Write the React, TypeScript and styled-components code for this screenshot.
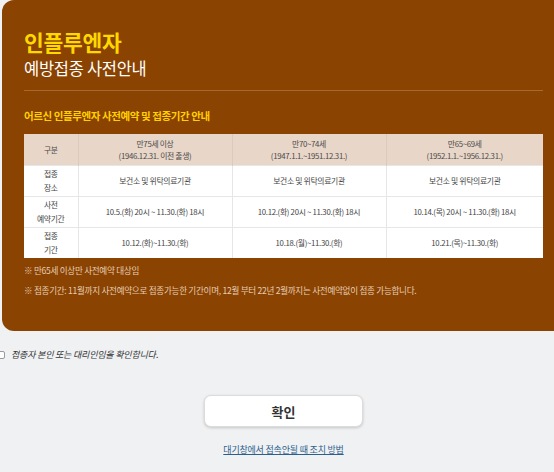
import React from "react";
import styled, { createGlobalStyle } from "styled-components";

const Global = createGlobalStyle`
  html, body { margin: 0; padding: 0; background: #f0f1f3; overflow: hidden; }
  body { font-family: "Noto Sans CJK KR", "Noto Sans", sans-serif; }
`;

const Page = styled.div`
  width: 563px;
  margin-left: 2px;
`;

const Panel = styled.section`
  background: #8a4300;
  border-radius: 12px;
  padding: 27px 22px 30px 22px;
  box-sizing: border-box;
  height: 331px;
`;

const Title = styled.h1`
  margin: 0;
  font-size: 21.5px;
  line-height: 30px;
  font-weight: 700;
  color: #ffd800;
  letter-spacing: -0.3px;
`;

const Subtitle = styled.h2`
  margin: 0;
  font-size: 16.5px;
  line-height: 22px;
  font-weight: 400;
  color: #ffffff;
  letter-spacing: -0.3px;
`;

const Divider = styled.hr`
  border: 0;
  height: 1px;
  background: #a9682e;
  margin: 11px 0 0 0;
`;

const SectionTitle = styled.h3`
  margin: 18px 0 0 0;
  font-size: 10.5px;
  line-height: 14px;
  font-weight: 700;
  color: #ffd000;
  letter-spacing: -0.4px;
`;

const Table = styled.table`
  margin-top: 11px;
  width: 519px;
  border-collapse: collapse;
  background: #ffffff;
  table-layout: fixed;
  font-size: 7.8px;
  color: #444;
  letter-spacing: -0.3px;
`;

const HeadCell = styled.th`
  background: #e8d6c8;
  font-weight: 400;
  height: 31px;
  padding: 0;
  line-height: 12px;
  text-align: center;
  color: #4a4a4a;
  border-left: 1px solid #dccbbd;
  &:first-child { border-left: 0; }
`;

const Cell = styled.td<{ $label?: boolean }>`
  height: 30px;
  padding: 0;
  text-align: center;
  line-height: ${(p) => (p.$label ? "14px" : "12px")};
  border-top: 1px solid #e6e6e6;
  border-left: 1px solid #e6e6e6;
  &:first-child { border-left: 0; }
`;

const Note = styled.p<{ $gap: number }>`
  margin: ${(p) => p.$gap}px 0 0 0;
  font-size: 8.6px;
  line-height: 12px;
  color: #e6cdb6;
  letter-spacing: -0.3px;
`;

const CheckRow = styled.label`
  display: flex;
  align-items: center;
  gap: 6px;
  margin: 17px 0 0 -5px;
  font-size: 9px;
  font-style: italic;
  color: #333;
  letter-spacing: -0.2px;
`;

const Box = styled.input`
  width: 8px;
  height: 8px;
  margin: 0;
  appearance: none;
  border: 1px solid #9a9a9a;
  border-radius: 2px;
  background: #fff;
`;

const ButtonWrap = styled.div`
  display: flex;
  justify-content: center;
  margin-top: 34px;
`;

const ConfirmButton = styled.button`
  width: 159px;
  height: 32px;
  background: #ffffff;
  border: 1px solid #dcdcdc;
  border-radius: 7px;
  box-shadow: 0 1px 3px rgba(0, 0, 0, 0.18);
  font-family: "Noto Sans CJK KR", sans-serif;
  font-size: 13px;
  font-weight: 700;
  color: #333;
`;

const HelpLink = styled.a`
  display: block;
  text-align: center;
  margin-top: 16px;
  font-size: 9px;
  color: #2e5f8c;
  text-decoration: underline;
  letter-spacing: -0.2px;
`;

const cols = ["54px", "154px", "154px", "157px"];

export default function App() {
  return (
    <>
      <Global />
      <Page>
        <Panel>
          <Title>인플루엔자</Title>
          <Subtitle>예방접종 사전안내</Subtitle>
          <Divider />
          <SectionTitle>어르신 인플루엔자 사전예약 및 접종기간 안내</SectionTitle>
          <Table>
            <colgroup>
              {cols.map((w, i) => (
                <col key={i} style={{ width: w }} />
              ))}
            </colgroup>
            <thead>
              <tr>
                <HeadCell>구분</HeadCell>
                <HeadCell>만75세 이상<br />(1946.12.31. 이전 출생)</HeadCell>
                <HeadCell>만70~74세<br />(1947.1.1.~1951.12.31.)</HeadCell>
                <HeadCell>만65~69세<br />(1952.1.1.~1956.12.31.)</HeadCell>
              </tr>
            </thead>
            <tbody>
              <tr>
                <Cell $label>접종<br />장소</Cell>
                <Cell>보건소 및 위탁의료기관</Cell>
                <Cell>보건소 및 위탁의료기관</Cell>
                <Cell>보건소 및 위탁의료기관</Cell>
              </tr>
              <tr>
                <Cell $label>사전<br />예약기간</Cell>
                <Cell>10.5.(화) 20시 ~ 11.30.(화) 18시</Cell>
                <Cell>10.12.(화) 20시 ~ 11.30.(화) 18시</Cell>
                <Cell>10.14.(목) 20시 ~ 11.30.(화) 18시</Cell>
              </tr>
              <tr>
                <Cell $label>접종<br />기간</Cell>
                <Cell>10.12.(화)~11.30.(화)</Cell>
                <Cell>10.18.(월)~11.30.(화)</Cell>
                <Cell>10.21.(목)~11.30.(화)</Cell>
              </tr>
            </tbody>
          </Table>
          <Note $gap={6}>※ 만65세 이상만 사전예약 대상임</Note>
          <Note $gap={8}>※ 접종기간: 11월까지 사전예약으로 접종가능한 기간이며, 12월 부터 22년 2월까지는 사전예약없이 접종 가능합니다.</Note>
        </Panel>
        <CheckRow>
          <Box type="checkbox" />
          접종자 본인 또는 대리인임을 확인합니다.
        </CheckRow>
        <ButtonWrap>
          <ConfirmButton>확인</ConfirmButton>
        </ButtonWrap>
        <HelpLink href="#">대기창에서 접속안될 때 조치 방법</HelpLink>
      </Page>
    </>
  );
}
